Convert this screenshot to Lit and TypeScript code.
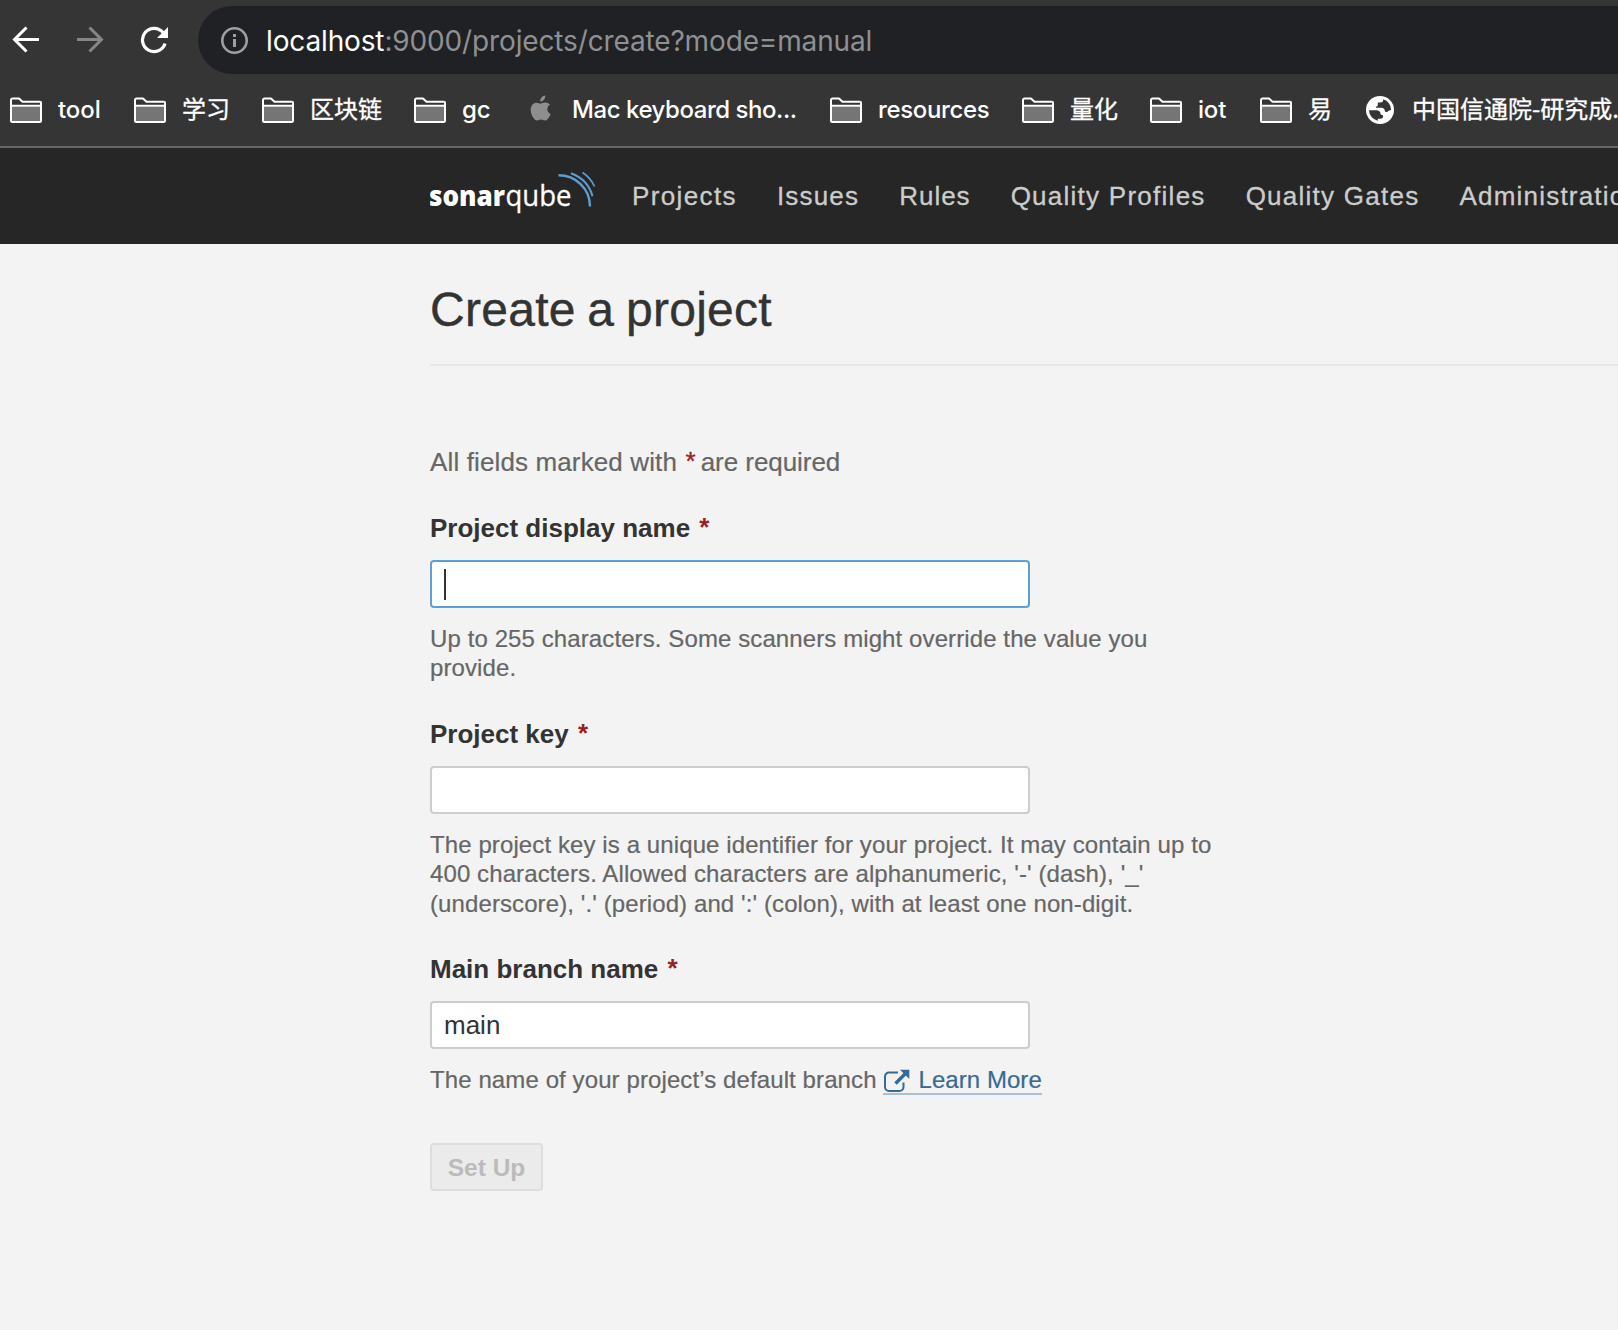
import { LitElement, html, css, svg } from "lit";
import { customElement } from "lit/decorators.js";

interface Bookmark { kind: "folder" | "apple" | "globe"; label: string; width: number; gap: number; ls: number; cjk?: boolean; }

// Widths run from one icon's left edge to the next one's.
const BOOKMARKS: Bookmark[] = [
  { kind: "folder", label: "tool", width: 124, gap: 16, ls: -0.1 },
  { kind: "folder", label: "学习", width: 128, gap: 16, ls: 0, cjk: true },
  { kind: "folder", label: "区块链", width: 152, gap: 16, ls: 0, cjk: true },
  { kind: "folder", label: "gc", width: 116, gap: 16, ls: -0.2 },
  { kind: "apple", label: "Mac keyboard sho...", width: 300, gap: 21, ls: -0.45 },
  { kind: "folder", label: "resources", width: 192, gap: 16, ls: -0.35 },
  { kind: "folder", label: "量化", width: 128, gap: 16, ls: 0, cjk: true },
  { kind: "folder", label: "iot", width: 110, gap: 16, ls: -0.2 },
  { kind: "folder", label: "易", width: 106, gap: 16, ls: 0, cjk: true },
  { kind: "globe", label: "中国信通院-研究成...", width: 252, gap: 18, ls: 0, cjk: true },
];

const NAV: [string, number][] = [
  ["Projects", 1.38],
  ["Issues", 1.17],
  ["Rules", 1],
  ["Quality Profiles", 1.26],
  ["Quality Gates", 1.26],
  ["Administration", 1.2],
];

const folder = html`<svg width="32" height="26" viewBox="0 0 32 26">${svg`
  <path d="M1 9.500h30V24a1 1 0 0 1-1 1H2a1 1 0 0 1-1-1z" fill="#757575"/>
  <path d="M1 3a1.500 1.500 0 0 1 1.500-1.500H9l3.500 3.200H30a1 1 0 0 1 1 1V24a1 1 0 0 1-1 1H2a1 1 0 0 1-1-1zM1 8.800h30" fill="none" stroke="#fff" stroke-width="2"/>`}</svg>`;
const apple = html`<svg class="apple" width="21" height="27" viewBox="0 0 21 26"><path fill="#8e8e8e" d="M15.300 0c.2 1.600-.5 3.200-1.400 4.300-.9 1.100-2.300 1.900-3.700 1.800-.2-1.500.6-3.100 1.400-4.100C12.600.9 14.100.1 15.300 0zM20 8.900c-.3.200-2.700 1.600-2.700 4.700 0 3.700 3.200 4.900 3.300 5-.1.100-.5 1.800-1.700 3.500-1 1.500-2.100 3-3.800 3s-2.100-1-4-1-2.500 1-4 1-2.700-1.400-3.900-3.100C1.800 20.100.7 17 .7 14.200c0-4.600 3-7 5.900-7 1.600 0 2.900 1 3.900 1 .9 0 2.400-1.100 4.200-1.100.7 0 3.200.1 5.300 1.800z"/></svg>`;
const globe = html`<svg width="28" height="28" viewBox="0 0 28 28"><circle cx="14" cy="14" r="14" fill="#fff"/><path fill="#353535" d="M3 14.200H10.500c2.300 0 4 1.300 4 3.300 0 .9.300 1.300 1.100 1.300 1.100 0 1.700.9 1.500 2-.2 1.200-1.200 1.900-2.500 1.900H11.800v2.100A11.200 11.200 0 0 1 3 14.200zM17.200 3.300c.2 2.100-.9 3.300-2.900 3.300h-2.500v2.300c0 1-.7 1.600-1.700 1.600-.6 0-.5 1.200.3 1.200h4.900c2 0 3.300 1.200 3.500 3 .2 1 1.100 1.400 2.100 1.200 1.200-.3 2.300-1.900 4.200-1.900A11.200 11.200 0 0 0 17.200 3.300z"/></svg>`;
const icons = { folder, apple, globe };

const star = html`<span class="star">*</span>`;

@customElement("app-root")
export class AppRoot extends LitElement {
  static styles = css`
    :host { display: block; width: 1618px; height: 1330px; overflow: hidden; background: #f3f3f3; color: #333;
      font-family: "Liberation Sans", Arial, sans-serif; }
    * { box-sizing: border-box; }
    svg { display: block; flex: none; }
    .toolbar { height: 74px; padding-top: 6px; background: #353535; display: flex; }
    .btns { width: 198px; display: flex; padding: 20px 0 0 12px; }
    .btns svg + svg { margin-left: 36px; }
    .omni { flex: 1; height: 68px; background: #202124; border-radius: 34px 0 0 34px; display: flex; align-items: center;
      padding-left: 23px; font-family: Inter, sans-serif; font-size: 28px; color: #8f9092; white-space: pre; }
    .url { margin-left: 18px; padding-top: 1px; letter-spacing: -0.14px; }
    .url b { color: #fff; font-weight: 400; }
    .marks { height: 74px; background: #353535; border-bottom: 2px solid #676767; display: flex; overflow: hidden; padding: 0 0 1px 10px; }
    .mark { display: flex; align-items: center; color: #fff; font: 500 24px Inter, "Noto Sans CJK SC", sans-serif; white-space: nowrap; flex: none; }
    .mark span { line-height: 30px; }
    .mark .cjk { font-weight: 400; padding-bottom: 3px; font-family: "Noto Sans CJK SC", sans-serif; -webkit-text-stroke: 0.3px #fff; }
    .apple { margin-bottom: 3px; }
    .nav { height: 96px; background: #262626; display: flex; padding-left: 430px; overflow: hidden; white-space: nowrap; }
    .logo { margin-top: 24px; }
    .links { display: flex; padding-left: 34px; gap: 40px; font-size: 26px; line-height: 96px; color: #ccc; -webkit-text-stroke: 0.3px #ccc; }
    .page { padding-left: 430px; }
    .title { margin: 0; height: 122px; padding-top: 36px; border-bottom: 2px solid #e6e6e6; font-size: 48px; line-height: 60px;
      font-weight: 400; letter-spacing: 0.28px; word-spacing: -2px; -webkit-text-stroke: 0.4px #333; }
    .req { margin-top: 80px; font-size: 26px; line-height: 32px; color: #666; letter-spacing: -0.05px; -webkit-text-stroke: 0.2px #666; }
    .lead { letter-spacing: 0.13px; }
    .star { color: #9c1f1f; line-height: 1; vertical-align: 1px; }
    .req .star { margin: 0 -2px 0 1px; -webkit-text-stroke: 0.4px #9c1f1f; }
    .label .star { margin-left: 2px; }
    .field { width: 800px; margin-top: 34px; }
    .label { height: 32px; font-size: 26px; line-height: 32px; font-weight: 700; white-space: pre; }
    .input { width: 600px; height: 48px; margin-top: 16px; border: 2px solid #cdcdcd; border-radius: 4px; background: #fff;
      display: flex; align-items: center; padding-left: 12px; font-size: 26px; }
    .focus { border-color: #5f9ed2; }
    .caret { width: 2px; height: 31px; background: #333; }
    .help { margin: 16px 0 35px; font-size: 24px; line-height: 29.400px; letter-spacing: 0.1px; color: #666; white-space: pre; display: flex;
      -webkit-text-stroke: 0.2px #666; }
    .link { display: flex; margin-left: 6px; height: 30px; color: #376a94; border-bottom: 2px solid #a9bfd3; letter-spacing: 0.05px;
      -webkit-text-stroke: 0.2px #376a94; }
    .link svg { margin: 4px 9px 0 1px; }
    .setup { width: 113px; height: 48px; margin-top: 48px; border: 2px solid #ddd; border-radius: 4px; background: #ebebeb; color: #bbb;
      font-size: 24.500px; font-weight: 700; display: flex; align-items: center; justify-content: center; padding-top: 1px; }
  `;

  render() {
    return html`
      <div class="toolbar">
        <div class="btns">
          <svg width="28" height="28" viewBox="0 0 28 28" fill="none" stroke="#fff" stroke-width="3"><path d="M27 13.500H3M14.500 1.500L2.500 13.500l12 12"/></svg>
          <svg width="28" height="28" viewBox="0 0 28 28" fill="none" stroke="#868686" stroke-width="3"><path d="M1 13.500h24M13.500 1.500l12 12-12 12"/></svg>
          <svg width="28" height="28" viewBox="0 0 28 28"><path d="M25.100 17.500A11.600 11.600 0 1 1 23 6.500" fill="none" stroke="#fff" stroke-width="3.200"/><path d="M28 1v11H17z" fill="#fff"/></svg>
        </div>
        <div class="omni">
          <svg width="27" height="27" viewBox="0 0 27 27"><circle cx="13.500" cy="13.500" r="12.200" fill="none" stroke="#9aa0a6" stroke-width="2.600"/><path d="M12 12h3v8h-3zM12 7h3v3h-3z" fill="#9aa0a6"/></svg>
          <span class="url"><b>localhost</b>:9000/projects/create?mode=manual</span>
        </div>
      </div>
      <div class="marks">
        ${BOOKMARKS.map((m) => html`<div class="mark" style="width:${m.width}px;gap:${m.gap}px;letter-spacing:${m.ls}px">${icons[m.kind]}<span class=${m.cjk ? "cjk" : ""}>${m.label}</span></div>`)}
      </div>
      <div class="nav">
        <svg class="logo" width="168" height="52" viewBox="0 0 168 52">
          <text x="-1" y="34" font-family="Open Sans" font-weight="800" font-size="29" fill="#fff" textLength="76" lengthAdjust="spacingAndGlyphs">sonar</text>
          <text x="75.500" y="34" font-family="Open Sans" font-size="29" fill="#fff" stroke="#fff" stroke-width="0.300" textLength="66" lengthAdjust="spacingAndGlyphs">qube</text>
          <g fill="none" stroke="#5f9ed2"><path d="M128.500 3.300c17 0 31.500 13 31.500 31.200" stroke-width="2.400"/><path d="M141 1.200c11 4 18.500 11.800 21.500 23" stroke-width="2"/><path d="M152.500.5c5.500 3.500 9.500 8.500 12 14" stroke-width="1.700"/></g>
        </svg>
        <div class="links">${NAV.map(([t, ls]) => html`<span style="letter-spacing:${ls}px">${t}</span>`)}</div>
      </div>
      <div class="page">
        <h1 class="title">Create a project</h1>
        <div class="req"><span class="lead">All fields marked with </span>${star} are required</div>
        <div class="field">
          <div class="label">Project display name ${star}</div>
          <div class="input focus"><span class="caret"></span></div>
          <div class="help">Up to 255 characters. Some scanners might override the value you
provide.</div>
        </div>
        <div class="field">
          <div class="label">Project key ${star}</div>
          <div class="input"></div>
          <div class="help">The project key is a unique identifier for your project. It may contain up to
400 characters. Allowed characters are alphanumeric, '-' (dash), '_'
(underscore), '.' (period) and ':' (colon), with at least one non-digit.</div>
        </div>
        <div class="field">
          <div class="label">Main branch name ${star}</div>
          <div class="input">main</div>
          <div class="help"><span>The name of your project’s default branch</span><span class="link"><svg width="26" height="23" viewBox="0 0 26 23"><path d="M14 3.500H5A4 4 0 0 0 1 7.500v10.500a4 4 0 0 0 4 4h10.500a4 4 0 0 0 4-4v-4.500" fill="none" stroke="#376a94" stroke-width="2"/><path d="M11.500 14.500L21.500 4.500" stroke="#376a94" stroke-width="3.400" fill="none"/><path d="M16 .8h9.300v9.300z" fill="#376a94"/></svg>Learn More</span></div>
        </div>
        <div class="setup">Set Up</div>
      </div>`;
  }
}
